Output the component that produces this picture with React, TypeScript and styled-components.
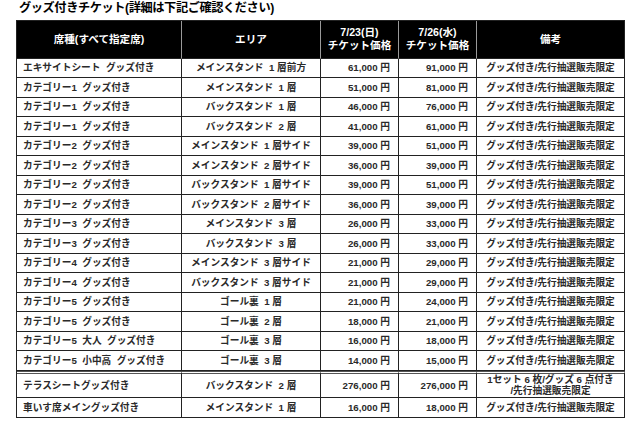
import React from 'react';
import styled, {createGlobalStyle} from 'styled-components';

const GlobalStyle = createGlobalStyle`
  html, body {
    margin: 0;
    padding: 0;
    background: #fff;
  }
  body {
    font-family: "Liberation Sans", "Noto Sans CJK JP", sans-serif;
    color: #111;
  }
`

const Page = styled.div`
  width: 640px;
  height: 426px;
  padding: 0 16px;
  box-sizing: border-box;
  overflow: hidden;
`

const Title = styled.h1`
  margin: 0;
  height: 19.5px;
  padding: 1px 0 0 3px;
  box-sizing: border-box;
  font-size: 12.2px;
  line-height: 15px;
  font-weight: 700;
  color: #000;
  letter-spacing: -0.4px;
`

const Table = styled.table`
  width: 608px;
  table-layout: fixed;
  border-collapse: separate;
  border-spacing: 0;
  border-top: 1px solid #222;
  border-left: 1px solid #222;
`

const HeadCell = styled.th`
  background: #000;
  color: #fff;
  font-size: 10.6px;
  line-height: 13px;
  font-weight: 700;
  text-align: center;
  padding: 0;
  height: 37px;
  border-right: 1px solid ${(p: {last?: boolean}) => p.last ? '#222' : '#9a9a9a'};
  border-bottom: 1px solid #222;
`

type CellProps = {align?: 'left' | 'center' | 'right', double?: boolean}

const Cell = styled.td<CellProps>`
  font-size: 9.7px;
  line-height: 11px;
  font-weight: 700;
  color: #2a2a2a;
  padding: 0 ${(p) => p.align === 'right' ? '8px' : '0'} 0 ${(p) => p.align === 'left' ? '6px' : '0'};
  text-align: ${(p) => p.align || 'center'};
  white-space: nowrap;
  border-right: 1px solid #222;
  border-bottom: 1px solid #222;
  border-top: ${(p) => p.double ? '3px double #555' : 'none'};
`

const Row = styled.tr<{h: number}>`
  height: ${(p) => p.h}px;
`

type Ticket = {seat: string, area: string, p1: string, p2: string, note?: string[], h?: number, double?: boolean}

const NOTE = ['グッズ付き/先行抽選販売限定']

const tickets: Ticket[] = [
  {seat: 'エキサイトシート  グッズ付き', area: 'メインスタンド  1 層前方', p1: '61,000', p2: '91,000'},
  {seat: 'カテゴリー1  グッズ付き', area: 'メインスタンド  1 層', p1: '51,000', p2: '81,000'},
  {seat: 'カテゴリー1  グッズ付き', area: 'バックスタンド  1 層', p1: '46,000', p2: '76,000'},
  {seat: 'カテゴリー1  グッズ付き', area: 'バックスタンド  2 層', p1: '41,000', p2: '61,000'},
  {seat: 'カテゴリー2  グッズ付き', area: 'メインスタンド  1 層サイド', p1: '39,000', p2: '51,000'},
  {seat: 'カテゴリー2  グッズ付き', area: 'メインスタンド  2 層サイド', p1: '36,000', p2: '39,000'},
  {seat: 'カテゴリー2  グッズ付き', area: 'バックスタンド  1 層サイド', p1: '39,000', p2: '51,000'},
  {seat: 'カテゴリー2  グッズ付き', area: 'バックスタンド  2 層サイド', p1: '36,000', p2: '39,000'},
  {seat: 'カテゴリー3  グッズ付き', area: 'メインスタンド  3 層', p1: '26,000', p2: '33,000'},
  {seat: 'カテゴリー3  グッズ付き', area: 'バックスタンド  3 層', p1: '26,000', p2: '33,000'},
  {seat: 'カテゴリー4  グッズ付き', area: 'メインスタンド  3 層サイド', p1: '21,000', p2: '29,000'},
  {seat: 'カテゴリー4  グッズ付き', area: 'バックスタンド  3 層サイド', p1: '21,000', p2: '29,000'},
  {seat: 'カテゴリー5  グッズ付き', area: 'ゴール裏  1 層', p1: '21,000', p2: '24,000'},
  {seat: 'カテゴリー5  グッズ付き', area: 'ゴール裏  2 層', p1: '18,000', p2: '21,000'},
  {seat: 'カテゴリー5  大人  グッズ付き', area: 'ゴール裏  3 層', p1: '16,000', p2: '18,000'},
  {seat: 'カテゴリー5  小中高  グッズ付き', area: 'ゴール裏  3 層', p1: '14,000', p2: '15,000'},
  {seat: 'テラスシートグッズ付き', area: 'バックスタンド  2 層', p1: '276,000', p2: '276,000',
    note: ['1セット 6 枚/グッズ 6 点付き', '/先行抽選販売限定'], h: 27, double: true},
  {seat: '車いす席メイングッズ付き', area: 'メインスタンド  1 層', p1: '16,000', p2: '18,000', h: 20},
]

const Pre = styled.span`
  white-space: pre;
`

const App = () => {
  return (
    <Page>
      <GlobalStyle/>
      <Title>グッズ付きチケット(詳細は下記ご確認ください)</Title>
      <Table>
        <colgroup>
          <col style={{width: 165}}/>
          <col style={{width: 139}}/>
          <col style={{width: 78}}/>
          <col style={{width: 78}}/>
          <col style={{width: 148}}/>
        </colgroup>
        <thead>
          <tr>
            <HeadCell>席種(すべて指定席)</HeadCell>
            <HeadCell>エリア</HeadCell>
            <HeadCell>7/23(日)<br/>チケット価格</HeadCell>
            <HeadCell>7/26(水)<br/>チケット価格</HeadCell>
            <HeadCell last>備考</HeadCell>
          </tr>
        </thead>
        <tbody>
          {tickets.map((t, i) =>
            <Row key={i} h={t.h || 19.5}>
              <Cell align="left" double={t.double}><Pre>{t.seat}</Pre></Cell>
              <Cell double={t.double}><Pre>{t.area}</Pre></Cell>
              <Cell align="right" double={t.double}>{t.p1} 円</Cell>
              <Cell align="right" double={t.double}>{t.p2} 円</Cell>
              <Cell double={t.double}>
                {(t.note || NOTE).map((n, j) => <div key={j}>{n}</div>)}
              </Cell>
            </Row>
          )}
        </tbody>
      </Table>
    </Page>
  );
};

export default App;
